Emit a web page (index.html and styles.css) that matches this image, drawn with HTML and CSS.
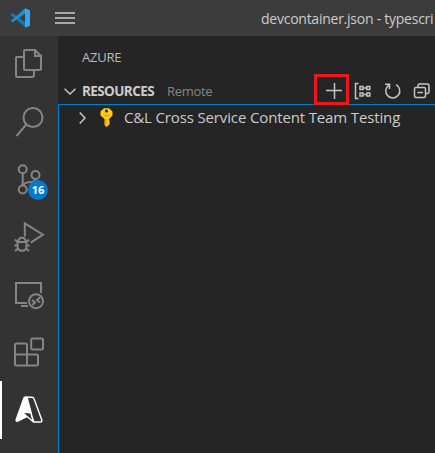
FILE: index.html
```html
<!DOCTYPE html>
<html lang="en">
<head>
<meta charset="utf-8">
<title>Azure resources</title>
<link rel="stylesheet" href="styles.css">
</head>
<body>
<header class="titlebar">
  <svg class="logo" viewBox="0 0 20 20"><path fill="#1479bd" d="M0 6.2 1.6 5 15 15v4.5L0 7.6z"/><path fill="#1e91d5" d="M0 12.8 14.2.2 15 5 1.6 14.2 0 13z"/><path fill="#36a5ee" d="m14 .2 5 2v15.6l-5 2z"/></svg>
  <svg class="menu" viewBox="0 0 20 12"><path d="M0 1h20M0 6h20M0 11h20"/></svg>
  <span class="filename">devcontainer.json - typescri</span>
</header>
<main class="workbench">
  <nav class="activity">
    <div class="item"><svg viewBox="0 36 58 57.5"><path d="M25 50h10l6 6v13q0 1-1 1H25q-1 0-1-1V51q0-1 1-1zM35 50v6h6M24 57h-7q-1 0-1 1v18q0 1 1 1h15q2 0 2-2v-5"/></svg></div>
    <div class="item"><svg viewBox="0 93.5 58 57.5"><circle cx="33" cy="117" r="9.5"/><path d="M26.2 124 16.5 135.5"/></svg></div>
    <div class="item"><svg viewBox="0 151 58 57.5"><circle cx="22.7" cy="169.3" r="4"/><circle cx="22.7" cy="189.5" r="4"/><circle cx="35.5" cy="175" r="4"/><path d="M22.7 173.3v12.2M35.5 179q-1 3-4 3-7 0-8.8 3.5"/></svg><span class="badge">16</span></div>
    <div class="item"><svg viewBox="0 208.5 58 57.5"><path d="M24.8 236v-13.2L43 234.2l-12.3 8"/><path d="M17.5 241.5h9v4q0 4.8-4.5 4.8t-4.5-4.8zM18.500 241q0-3.700 3.500-3.700t3.500 3.700M17.500 241.500 15 239M26.500 241.500 29 239M17.500 245h-3.300M26.500 245h3.300M18 248l-3 2.500M26 248l3 2.500"/></svg></div>
    <div class="item"><svg viewBox="0 266 58 57.5"><path d="M27 303H16v-20h25v10M21 306h7"/><circle cx="36" cy="301.2" r="7"/><path d="m32 300 3 2.500-3 2.500M40 297.500l-3 2.500 3 2.500"/></svg></div>
    <div class="item"><svg viewBox="0 323.5 58 57.5"><path d="M16.500 343h9q1.500 0 1.500 1.500V354H15v-9.500q0-1.500 1.500-1.500zM15 354h21.500q1.500 0 1.500 1.500v8q0 1.500-1.500 1.500h-20q-1.500 0-1.500-1.500zM27 354v11"/><rect x="31.200" y="338" width="11.800" height="11" rx="1.500"/></svg></div>
    <div class="item active"><svg viewBox="0 381 58 57.5"><path class="solid" d="M25 396.5h2.500l4.500 17-8.500-.5 4 4-10 5q-2.500 0-2-2.500l7.500-21q.5-2 2-2z"/><path class="outline" d="M26 397.200h6q1.500 0 2 1.500l7.800 21.300q.5 2-1.500 2h-6.800zM23.500 413.500l10 8.500M26 397.200 33.800 422"/></svg></div>
  </nav>
  <section class="sidebar">
    <h1 class="view-title">AZURE</h1>
    <div class="section-head">
      <svg class="chevron-down" viewBox="0 0 12 7"><path d="m.5.7 5.500 5.300L11.500.7"/></svg>
      <strong class="section-title">RESOURCES</strong>
      <span class="scope">Remote</span>
      <div class="actions">
        <span class="add"><svg viewBox="0 0 18 18"><path d="M1 9.500h16M9.500 2v16"/></svg></span>
        <svg class="group" viewBox="0 0 18 18"><path d="M4.500 1.500h-3v15h3M9.500 6h3M9.500 12.500h3"/><rect x="6" y="4.500" width="3" height="3"/><rect x="12.800" y="4.500" width="3" height="3"/><rect x="6" y="11" width="3" height="3"/><rect x="12.800" y="11" width="3" height="3"/></svg>
        <svg class="refresh" viewBox="0 0 18 18"><path d="M4.600 3.300A7 7 0 1 0 12 2.700M1 2.300h4.500V7"/></svg>
        <svg class="collapse" viewBox="0 0 18 18"><path d="M5 5V3.500Q5 2 6.500 2h8Q16 2 16 3.500v6q0 2-2 2h-1.500M4.500 10.500h5.500"/><rect x="1.500" y="5.500" width="11" height="10" rx="1.500"/></svg>
      </div>
    </div>
    <div class="tree">
      <div class="row">
        <svg class="chevron-right" viewBox="0 0 7 12"><path d="m.7.5 5.300 5.500L.7 11.500"/></svg>
        <svg class="key" viewBox="0 0 13 19"><path fill="#ffca1c" fill-rule="evenodd" d="M4 .3h5l3.500 3.200v4L9 11v1.200l1 1-1 1.100 1 1.200-1 1.200L6.500 19 4.500 17v-6L.5 7.500v-4zM6.500 1.500a1.500 1.500 0 1 0 0 3 1.500 1.500 0 0 0 0-3z"/><path stroke="#e8a800" d="M3.500 7.500h6M6 11v6"/></svg>
        <span class="label">C&amp;L Cross Service Content Team Testing</span>
      </div>
    </div>
  </section>
</main>
</body>
</html>
```

FILE: styles.css
```css
* { box-sizing: border-box; }
body {
  margin: 0;
  height: 453px;
  overflow: hidden;
  background: #252526;
  color: #ccc;
  font-family: "Open Sans", "Noto Sans", sans-serif;
}
svg { display: block; flex: none; fill: none; stroke: #c5c5c5; stroke-width: 1.5; }
.titlebar {
  display: flex;
  align-items: center;
  height: 36px;
  padding-left: 11px;
  background: #3c3c3c;
  overflow: hidden;
}
.logo { width: 20px; height: 20px; margin-top: -1px; stroke: none; }
.menu { width: 20px; height: 12px; margin-left: 24px; stroke: #ccc; stroke-width: 1.6; }
.filename { margin-left: 186px; margin-top: 2px; font-size: 14px; line-height: 20px; white-space: nowrap; letter-spacing: -0.25px; }
.workbench { display: flex; height: 417px; }
.activity { width: 58px; flex: none; background: #333; }
.item { position: relative; height: 57.5px; }
.item svg { width: 58px; height: 57.5px; stroke: #858585; stroke-width: 2; }
.active { border-left: 2px solid #fff; }
.active svg { margin-left: -2px; stroke: #fff; stroke-width: 1.4; }
.active .solid { fill: #fff; stroke: none; }
.badge {
  position: absolute;
  left: 28px;
  top: 28.5px;
  width: 20px;
  height: 20px;
  border-radius: 50%;
  background: #007acc;
  color: #fff;
  font-size: 11px;
  font-weight: 700;
  line-height: 20px;
  text-align: center;
}
.sidebar { flex: 1; min-width: 0; display: flex; flex-direction: column; }
.view-title { margin: 11px 0 0 24px; height: 30px; font-size: 13px; font-weight: 400; line-height: 20px; letter-spacing: -0.2px; color: #bbb; }
.section-head { display: flex; align-items: center; height: 27px; padding-left: 6px; }
.chevron-down { width: 12px; height: 7px; margin-top: 2px; }
.section-title { width: 74px; margin-left: 6px; font-size: 13.5px; letter-spacing: -0.6px; }
.scope { width: 46px; margin-left: 11px; font-size: 13px; letter-spacing: -0.3px; color: #858585; }
.actions { display: flex; align-items: center; margin-left: 101px; }
.add {
  display: flex;
  align-items: center;
  justify-content: center;
  position: relative;
  z-index: 1;
  width: 35px;
  height: 31px;
  margin-top: -3px;
  padding-left: 4px;
  border: 3px solid #e9191b;
}
.add svg, .group, .refresh, .collapse { width: 18px; height: 18px; }
.add svg { margin-top: 2px; }
.group { margin-left: 5px; }
.refresh { margin-left: 12px; }
.collapse { margin-left: 11px; }
.tree { flex: 1; border: 1px solid #007fd4; border-width: 1px 0 0 1px; }
.row { display: flex; align-items: center; height: 26px; padding-left: 20px; }
.chevron-right { width: 7px; height: 12px; }
.key { width: 13px; height: 19px; margin-left: 14px; margin-top: -2px; stroke: none; }
.label { margin-left: 11px; margin-top: -2px; font-size: 15px; letter-spacing: -0.14px; white-space: nowrap; }
```
